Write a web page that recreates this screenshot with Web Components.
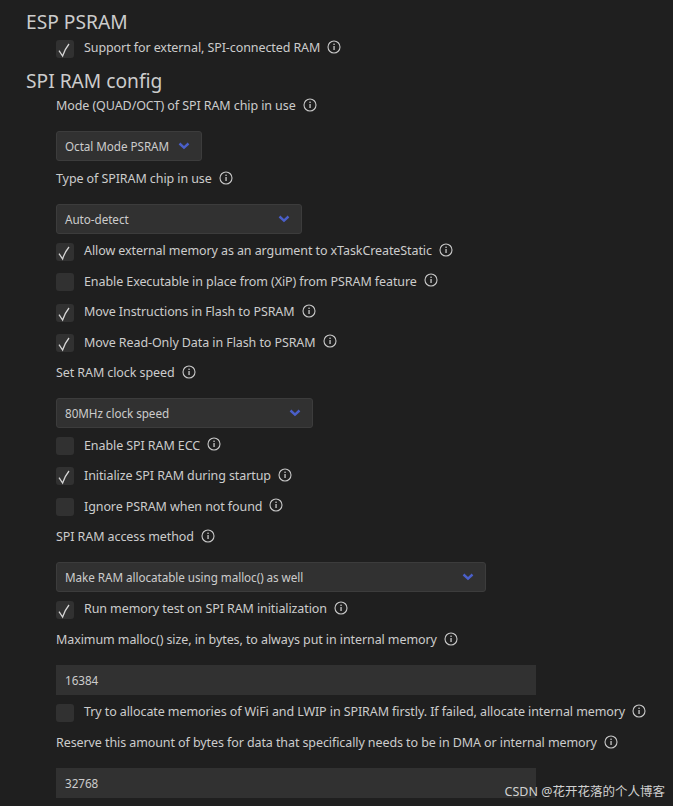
<!DOCTYPE html>
<html lang="zh"><head><meta charset="utf-8"><title>ESP PSRAM</title>
<style>
html,body{margin:0;height:806px;overflow:hidden;background:#1f1f1f}
body{color:#ccc;font:12.5px/20px "Noto Sans","Open Sans","Noto Sans CJK SC",sans-serif;letter-spacing:-.09px}
s-select + s-check, s-input + s-check{--t:8.6px}
s-check + s-label{--t:10.3px}
s-check{--up:-.4px}
s-check:first-of-type{--up:-1px}
</style></head><body>
<settings-page>
  <s-title style="--t:8px">ESP PSRAM</s-title>
  <s-check checked style="--t:4px">Support for external, SPI-connected RAM</s-check>
  <s-title style="--t:9px">SPI RAM config</s-title>
  <s-label style="--t:0px">Mode (QUAD/OCT) of SPI RAM chip in use</s-label>
  <s-select w="146">Octal Mode PSRAM</s-select>
  <s-label>Type of SPIRAM chip in use</s-label>
  <s-select w="246">Auto-detect</s-select>
  <s-check checked>Allow external memory as an argument to xTaskCreateStatic</s-check>
  <s-check>Enable Executable in place from (XiP) from PSRAM feature</s-check>
  <s-check checked>Move Instructions in Flash to PSRAM</s-check>
  <s-check checked>Move Read-Only Data in Flash to PSRAM</s-check>
  <s-label>Set RAM clock speed</s-label>
  <s-select w="257">80MHz clock speed</s-select>
  <s-check>Enable SPI RAM ECC</s-check>
  <s-check checked>Initialize SPI RAM during startup</s-check>
  <s-check>Ignore PSRAM when not found</s-check>
  <s-label>SPI RAM access method</s-label>
  <s-select w="430">Make RAM allocatable using malloc() as well</s-select>
  <s-check checked>Run memory test on SPI RAM initialization</s-check>
  <s-label>Maximum malloc() size, in bytes, to always put in internal memory</s-label>
  <s-input>16384</s-input>
  <s-check>Try to allocate memories of WiFi and LWIP in SPIRAM firstly. If failed, allocate internal memory</s-check>
  <s-label>Reserve this amount of bytes for data that specifically needs to be in DMA or internal memory</s-label>
  <s-input>32768</s-input>
</settings-page>
<s-watermark>CSDN @花开花落的个人博客</s-watermark>
<script>
const INFO='<svg width="14" height="14" viewBox="0 0 14 14" fill="none" aria-hidden="true"><circle cx="7" cy="7" r="6" stroke="#c8c8c8" stroke-width="1.1"/><rect x="6.4" y="6" width="1.3" height="4" fill="#c8c8c8"/><rect x="6.4" y="3.6" width="1.3" height="1.4" fill="#c8c8c8"/></svg>';
function def(name,html){customElements.define(name,class extends HTMLElement{connectedCallback(){if(this.shadowRoot)return;this.attachShadow({mode:'open'}).innerHTML=typeof html==='function'?html(this):html;}});}
def('settings-page','<style>:host{display:block;padding:0 0 0 26px}</style><slot></slot>');
def('s-title','<style>:host{display:block;margin-top:var(--t,0);font-size:19.2px;line-height:28px;letter-spacing:0;color:#ccc}</style><slot></slot>');
def('s-label',`<style>:host{display:flex;align-items:center;gap:7px;margin:var(--t,7px) 0 0 30px;box-sizing:border-box;padding-top:1px;height:20px;white-space:nowrap}svg{display:block;flex:none;margin-top:-1px}</style><slot></slot>${INFO}`);
def('s-check',h=>`<style>:host{display:flex;align-items:center;margin:var(--t,12.5px) 0 0 30px;height:18px;white-space:nowrap}
.b{flex:none;width:18px;height:18px;border-radius:3px;background:#313131;margin-right:10px;display:block}
.t{position:relative;top:var(--up,-.4px);display:flex;align-items:center;gap:7px}svg.i{display:block;margin-top:-3px}</style>
<svg class="b" viewBox="0 0 18 18" fill="none" aria-hidden="true">${h.hasAttribute('checked')?'<path d="M3 10.6 L6.6 16 Q8.6 9.5 13 4" stroke="#d4d4d4" stroke-width="1.3"/>':''}</svg>
<span class="t"><slot></slot>${INFO.replace('<svg','<svg class="i"')}</span>`);
def('s-select',h=>`<style>:host{display:flex;align-items:center;justify-content:space-between;box-sizing:border-box;width:${h.getAttribute('w')}px;height:30px;margin:16px 0 0 30px;padding:0 11px 0 8px;background:#313131;border:1px solid #3c3c3c;border-radius:3px;font-size:11.7px;letter-spacing:-.05px;white-space:nowrap}svg{display:block}</style><slot></slot>
<svg width="12" height="8" viewBox="0 0 12 8" aria-hidden="true"><path d="M1.5 1.5 L6 5.6 L10.5 1.5" fill="none" stroke="#4a5fc9" stroke-width="2.4"/></svg>`);
def('s-input','<style>:host{display:flex;align-items:center;box-sizing:border-box;width:480px;height:30px;margin:16px 0 0 30px;padding-left:9px;background:#313131;font-size:11.7px;letter-spacing:-.05px}</style><slot></slot>');
def('s-watermark','<style>:host{position:absolute;right:8px;bottom:4px;font-size:12.5px;line-height:20px;letter-spacing:0;color:#d0d0d0;white-space:nowrap;font-family:"Noto Sans","Noto Sans CJK SC",sans-serif}</style><slot></slot>');
</script>
</body></html>
